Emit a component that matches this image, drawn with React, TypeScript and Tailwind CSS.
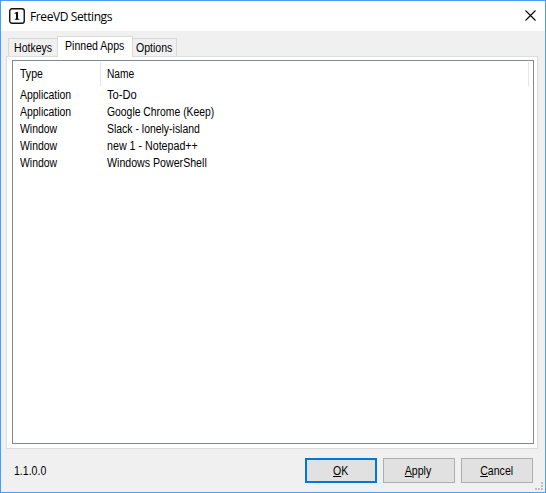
import React from "react";

const rows = [
  { type: "Application", name: "To-Do", scale: "scale-x-[0.93]" },
  { type: "Application", name: "Google Chrome (Keep)", scale: "scale-x-[0.865]" },
  { type: "Window", name: "Slack - lonely-island", scale: "scale-x-[0.87]" },
  { type: "Window", name: "new 1 - Notepad++", scale: "scale-x-[0.89]" },
  { type: "Window", name: "Windows PowerShell", scale: "scale-x-[0.885]" },
];

// Narrow label text, condensed to dialog-font proportions.
function Label({ children, scale = "scale-x-[0.88]", origin = "origin-left" }: { children: React.ReactNode; scale?: string; origin?: string }) {
  return <span className={"inline-block whitespace-nowrap " + origin + " " + scale}>{children}</span>;
}

function AppIcon() {
  return (
    <svg width="16" height="16" viewBox="0 0 16 16" fill="none">
      <rect x="0.75" y="0.75" width="14.5" height="14.5" rx="2.2" stroke="#111" strokeWidth="1.4" />
      <path d="M5.6 5.6L8 4.6V11M5.8 11.3H10.2" stroke="#111" strokeWidth="1.1" />
      <path d="M8 4V11.8" stroke="#111" strokeWidth="2" />
    </svg>
  );
}

function ResizeGrip() {
  return (
    <svg className="absolute right-[2px] bottom-[2px]" width="8" height="8" fill="#bfbfbf" shapeRendering="crispEdges">
      <path d="M6 0h2v2h-2zM6 3h2v2h-2zM0 6h2v2h-2zM3 6h2v2h-2zM6 6h2v2h-2z" />
    </svg>
  );
}

function DialogButton({ hotkey, rest, primary }: { hotkey: string; rest: string; primary?: boolean }) {
  return (
    <button
      className={
        "flex h-[25px] w-[72px] items-center justify-center bg-[#e1e1e1] pt-px pr-px " +
        (primary ? "border-2 border-[#0078d7]" : "border border-[#adadad]")
      }
    >
      <Label origin="origin-center">
        <span className="underline underline-offset-1">{hotkey}</span>{rest}
      </Label>
    </button>
  );
}

export default function App() {
  return (
    <div className="relative flex h-[493px] w-[546px] flex-col border border-[#4a9df2] bg-[#f0f0f0] font-['Liberation_Sans',Arial,sans-serif] text-[12px] leading-[17px] text-black">
      <header className="flex h-[30px] shrink-0 items-center bg-white pl-2">
        <AppIcon />
        <h1 className="ml-[5px] font-['Open_Sans',sans-serif] text-[12px] tracking-[-0.4px]">FreeVD Settings</h1>
        <svg className="mr-[9px] mb-px ml-auto" width="11" height="11" viewBox="0 0 11 11" stroke="#000" strokeWidth="1.1">
          <path d="M.5.5l10 10M10.5.5l-10 10" />
        </svg>
      </header>

      <nav className="mt-[5px] flex h-5 shrink-0 items-end pl-[7px]">
        <div className="h-[18px] w-[49px] border border-r-0 border-b-0 border-[#d9d9d9] pt-px pl-[5px]"><Label>Hotkeys</Label></div>
        <div className="z-10 -mb-px h-[21px] w-[76px] border border-b-0 border-[#d9d9d9] bg-white pt-px pl-[7px]"><Label>Pinned Apps</Label></div>
        <div className="h-[18px] w-[44px] border border-b-0 border-l-0 border-[#d9d9d9] pt-px pl-[3px]"><Label>Options</Label></div>
      </nav>

      <main className="ml-[5px] flex h-[393px] w-[532px] shrink-0 border border-[#dcdcdc] bg-white pt-[3px] pl-[5px]">
        <div className="h-[384px] w-[522px] border border-[#828790] pt-px">
          <div className="flex h-[25px] pb-px">
            <div className="h-full w-[88px] border-r border-[#e5e5e5] pt-[4px] pl-[7px]"><Label>Type</Label></div>
            <div className="h-full w-[428px] border-r border-[#e5e5e5] pt-[4px] pl-[6px]"><Label scale="scale-x-[0.85]">Name</Label></div>
          </div>
          {rows.map((row) => (
            <div key={row.name} className="flex h-[17px]">
              <div className="w-[94px] pl-[7px]"><Label scale="scale-x-[0.87]">{row.type}</Label></div>
              <div><Label scale={row.scale}>{row.name}</Label></div>
            </div>
          ))}
        </div>
      </main>

      <footer className="flex items-center pt-[9px] pr-[12px] pl-[13px]">
        <span className="pt-px"><Label>1.1.0.0</Label></span>
        <div className="ml-auto flex gap-1.5">
          <DialogButton hotkey="O" rest="K" primary />
          <DialogButton hotkey="A" rest="pply" />
          <DialogButton hotkey="C" rest="ancel" />
        </div>
      </footer>
      <ResizeGrip />
    </div>
  );
}
